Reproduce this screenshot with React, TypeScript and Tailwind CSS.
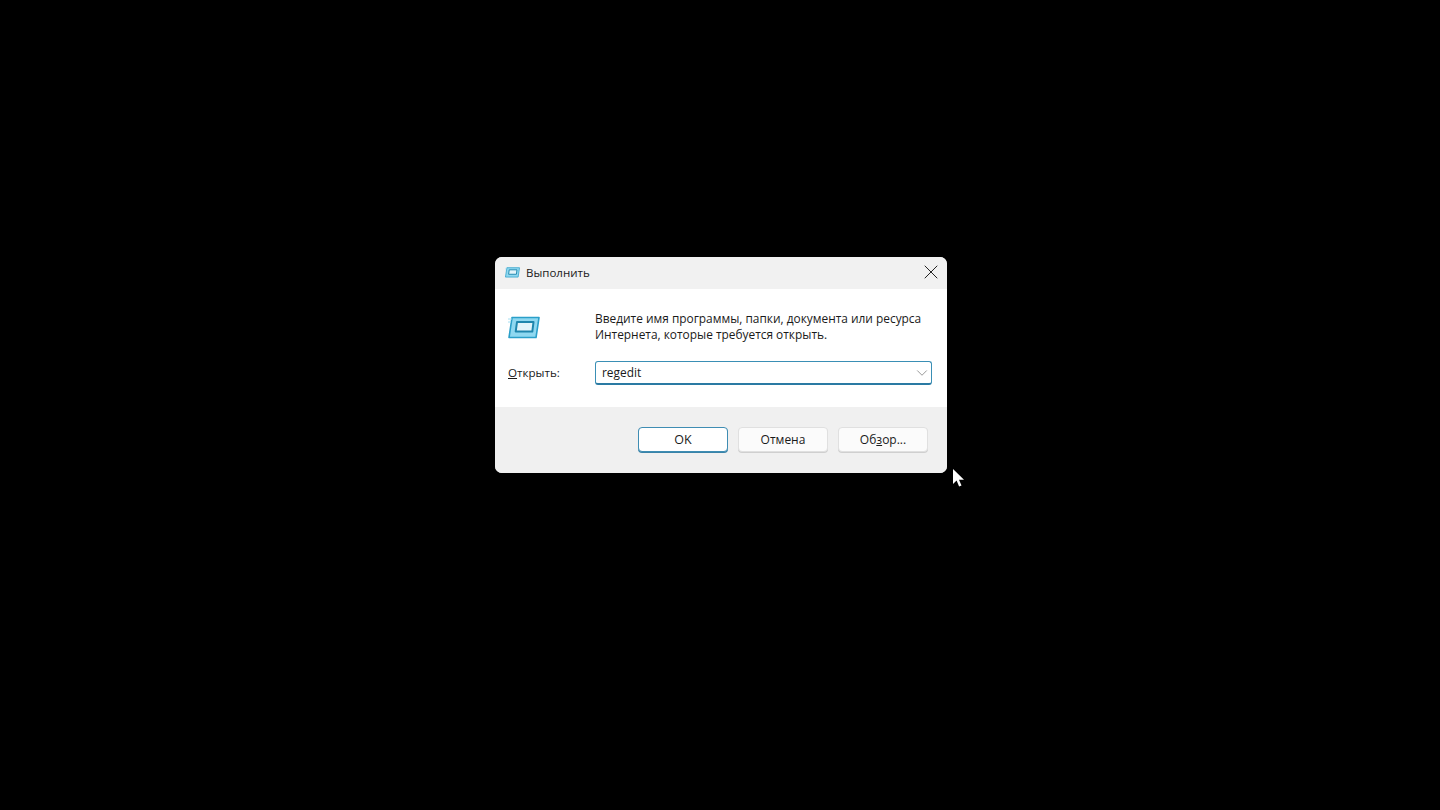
import { ChevronDown, X } from "lucide-react";

function RunIcon({ size }: { size: number }) {
  return (
    <svg width={size} height={size * 0.72} viewBox="0 0 32 23" fill="none">
      <path d="M4 1.5h27L28 21.5H1z" fill="#8fd8f0" stroke="#2a9fc9" strokeWidth="1.6" strokeLinejoin="round" />
      <path d="M9 6h16.5l-1.2 9.5H7.7z" fill="#e2f4fa" stroke="#1f86ad" strokeWidth="2" strokeLinejoin="round" />
      <path d="M0 3h4M0 6h3" stroke="#a5dff2" strokeWidth="1" />
    </svg>
  );
}

function DialogButton({ children, primary }: { children: React.ReactNode; primary?: boolean }) {
  return (
    <button
      className={
        primary
          ? "h-[25px] w-[90px] rounded-[4px] border border-[#3f8db3] bg-white pt-px text-[12.5px] text-[#1a1a1a] shadow-[0_1px_0_#3a83a8]"
          : "h-[25px] w-[90px] rounded-[4px] border border-[#e0e0e0] bg-[#fbfbfb] text-[12px] text-[#1a1a1a] shadow-[0_1px_0_#cfcfcf]"
      }
    >
      {children}
    </button>
  );
}

export default function App() {
  return (
    <div className="relative h-[810px] w-[1440px] overflow-hidden bg-black pl-[495px] pt-[257px] font-['Open_Sans','Noto_Sans',sans-serif] text-[#1a1a1a]">
      <div className="flex h-[216px] w-[452px] flex-col overflow-hidden rounded-[7px] bg-white">
        {/* title bar */}
        <div className="flex h-[32px] items-center justify-between bg-[#f1f1f1] pb-[1px] pl-[10px] pr-[4px]">
          <div className="flex items-center gap-[6px]">
            <RunIcon size={15} />
            <span className="text-[11.5px]">Выполнить</span>
          </div>
          <X className="mb-[2px] h-6 w-6 text-[#222]" strokeWidth={1} />
        </div>

        {/* body */}
        <div className="flex h-[118px] flex-col bg-white pl-[13px] pr-[15px]">
          <div className="flex h-[64px] items-start pt-[21px]">
            <div className="w-[87px] pt-[6px]">
              <RunIcon size={32} />
            </div>
            <p className="whitespace-nowrap text-[11.9px] leading-[16px]">
              Введите имя программы, папки, документа или ресурса
              <br />
              Интернета, которые требуется открыть.
            </p>
          </div>
          <div className="mt-[8px] flex items-center">
            <span className="w-[87px] text-[11.6px]">
              <span className="underline">О</span>ткрыть:
            </span>
            <div className="flex h-[24px] w-[337px] items-center justify-between rounded-[3px] border border-b-2 border-[#3a8fb5] border-b-[#2a7aa3] pl-[6px]">
              <span className="text-[11.9px]">regedit</span>
              <ChevronDown className="h-[18px] w-[18px] text-[#777]" strokeWidth={1} />
            </div>
          </div>
        </div>

        {/* footer */}
        <div className="flex flex-1 items-start justify-end gap-[10px] bg-[#f0f0f0] pr-[19px] pt-[20px]">
          <DialogButton primary>OK</DialogButton>
          <DialogButton>Отмена</DialogButton>
          <DialogButton>
            Об<span className="underline">з</span>ор...
          </DialogButton>
        </div>
      </div>

      {/* mouse cursor */}
      <svg className="absolute left-[952px] top-[468px]" width="13" height="20" viewBox="0 0 13 20">
        <path d="M1 1v15l3.6-3.4 2.5 6 2.4-1-2.5-5.8h5z" fill="#fff" />
      </svg>
    </div>
  );
}
